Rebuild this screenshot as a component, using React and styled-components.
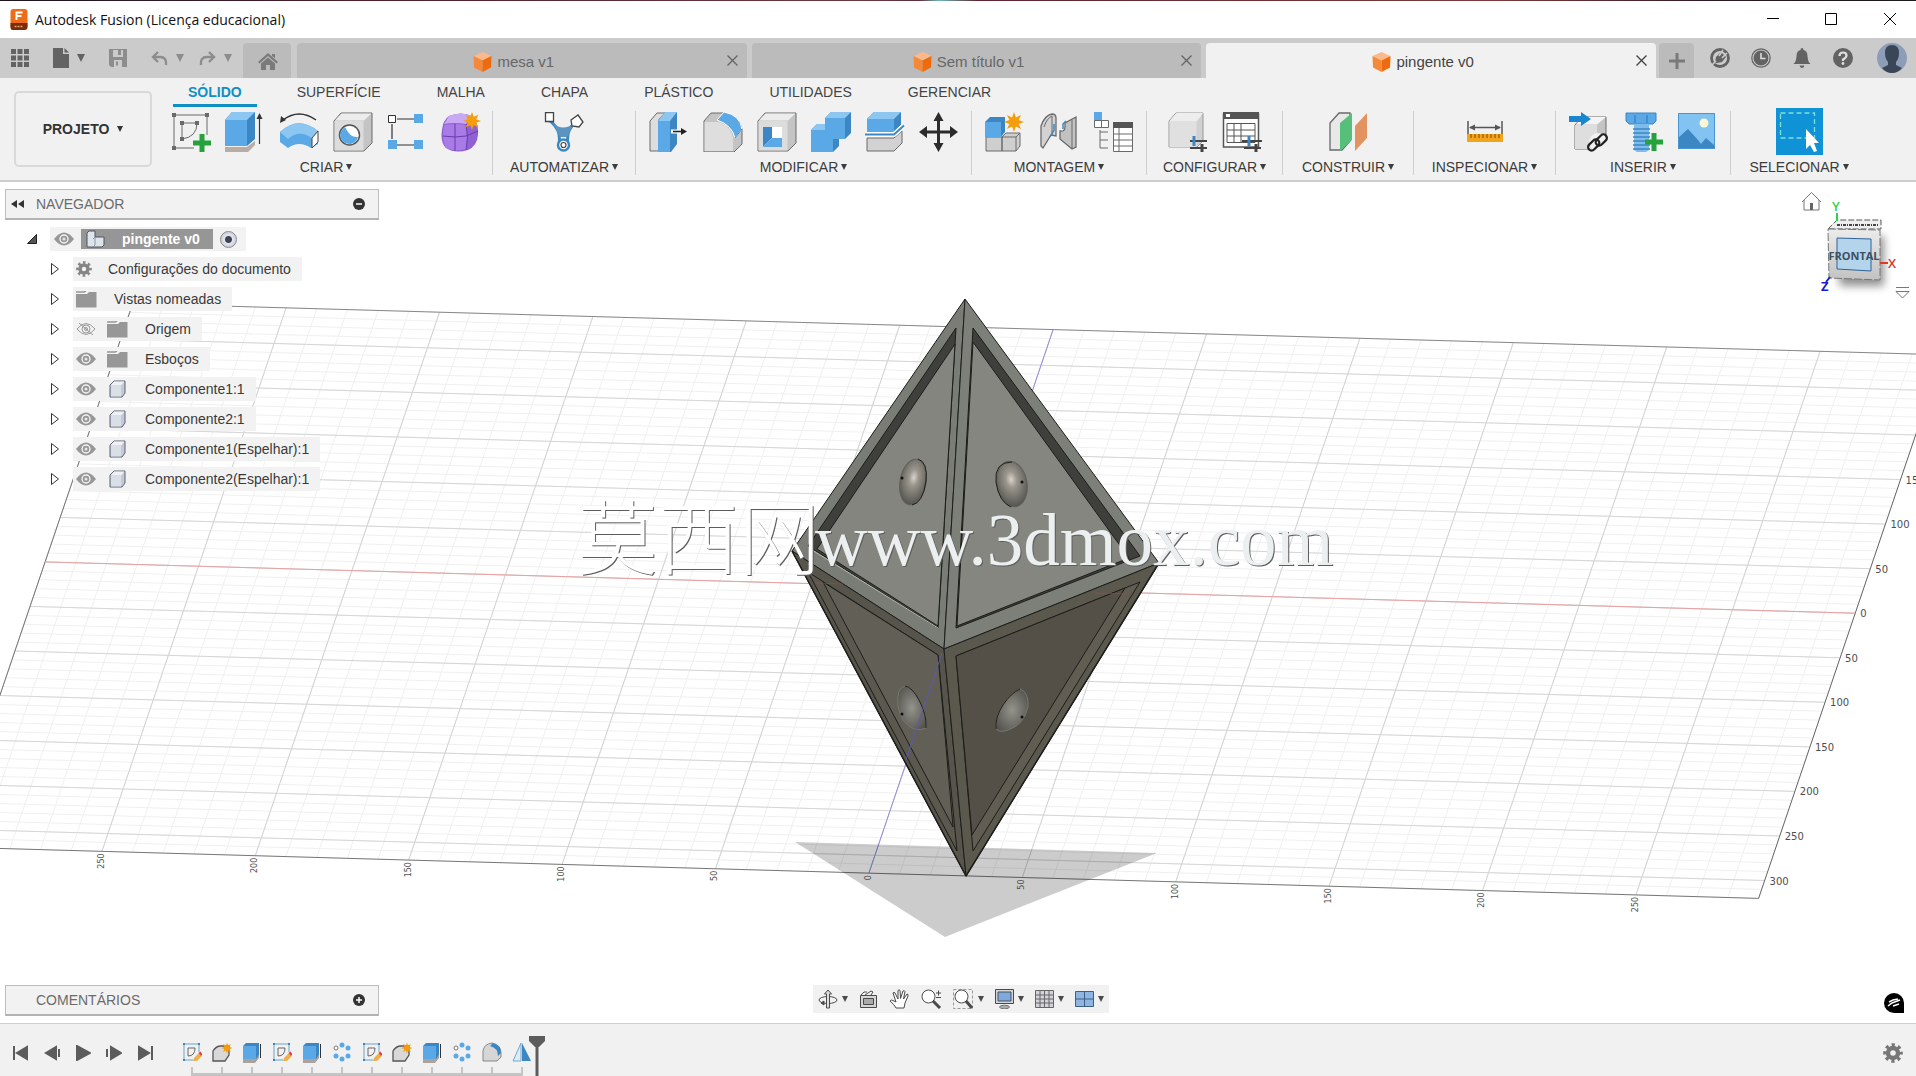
import React, { useState } from 'react'
import styled, { createGlobalStyle } from 'styled-components'


const GlobalStyle = createGlobalStyle`
  * {
    box-sizing: border-box;
  }

  body {
    margin: 0;
    background: #fff;
    color: #333;
    font-family: "Liberation Sans", Arial, sans-serif;
    font-size: 14px;
  }

  button {
    margin: 0;
    padding: 0;
    border: 0;
    background: none;
    color: inherit;
    font: inherit;
    cursor: pointer;
  }

  svg {
    display: block;
    flex: none;
  }

  ul, ol {
    margin: 0;
    padding: 0;
    list-style: none;
  }
`

const Page = styled.div`
  display: flex;
  flex-direction: column;
  min-height: 100vh;
  overflow: hidden;
`

/* ---------- title bar ---------- */

const TitleBar = styled.header`
  display: flex;
  align-items: center;
  height: 38px;
  padding: 0 18px 0 9px;
  gap: 6px;
  background:
    linear-gradient(90deg, #1b1420, #4a1f28 18%, #6b3a40 45%, #5b2f3a 48%, #6fb5bd 49%, #5b2530 51%, #7d3a3c 78%, #2a1820 90%, #1c1a1c) top / 100% 1px no-repeat,
    #fff;
`

const AppTitle = styled.h1`
  flex: 1;
  margin: 0;
  color: #111;
  font-family: "Open Sans", "Noto Sans", sans-serif;
  font-size: 14px;
  font-weight: 400;
`

const WindowButtons = styled.div`
  display: flex;
  gap: 42px;
`

/* ---------- document tabs ---------- */

const TabBar = styled.nav`
  display: flex;
  align-items: flex-end;
  height: 40px;
  background: #cbcbcb;
  color: #636363;
`

const QuickTools = styled.div`
  display: flex;
  align-items: center;
  align-self: stretch;
  gap: 24px;
  padding: 0 11px 0 10px;
`

const ToolPair = styled.div`
  display: flex;
  gap: 15px;
`

const QuickButton = styled.button`
  display: flex;
  align-items: center;
  gap: 8px;
  color: ${p => (p.$dim ? '#8d8d8d' : '#636363')};
`

const HomeTab = styled.button`
  display: flex;
  align-items: center;
  justify-content: center;
  width: 48px;
  height: 35px;
  padding-top: 2px;
  border-radius: 4px 4px 0 0;
  background: #bbb;
  color: #7a7a7a;
`

const DocTabs = styled.div`
  display: flex;
  flex: 1;
  gap: 5px;
  padding: 0 3px 0 6px;
`

const DocTab = styled.div`
  display: flex;
  flex: 1;
  align-items: center;
  height: 35px;
  padding-right: 9px;
  border-radius: 4px 4px 0 0;
  background: ${p => (p.$active ? '#f1f1f1' : '#bbb')};
  color: ${p => (p.$active ? '#444' : '#666')};
`

const DocName = styled.button`
  display: flex;
  flex: 1;
  align-items: center;
  justify-content: center;
  gap: 5px;
  padding: 2px 0 0 4px;
  font-size: 15px;
`

const AddTab = styled(HomeTab)`
  width: 35px;
  padding-top: 0;
`

const AccountTools = styled.div`
  display: flex;
  align-items: center;
  align-self: stretch;
  gap: 21px;
  padding: 0 9px 0 16px;

  button:last-child {
    margin-left: 3px;
  }
`

/* ---------- ribbon ---------- */

const Ribbon = styled.section`
  display: flex;
  height: 104px;
  border-bottom: 2px solid #cdcdcd;
  background: #f1f1f1;
`

const ProjectButton = styled.button`
  display: flex;
  align-items: center;
  justify-content: center;
  gap: 8px;
  width: 138px;
  height: 76px;
  margin: 13px 8px 0 14px;
  border: 2px solid #d9d9d9;
  border-radius: 5px;
  font-weight: bold;
`

const RibbonTabs = styled.div`
  display: flex;
  gap: 24px;
  height: 30px;
  padding-left: 13px;
`

const RibbonTab = styled.button`
  height: 29px;
  padding: 2px 15px 0;
  border-bottom: 3px solid ${p => (p.$active ? '#0f8fc4' : 'transparent')};
  color: ${p => (p.$active ? '#0f8fc4' : '#444')};
  font-weight: ${p => (p.$active ? 'bold' : 'normal')};

  & + & {
    padding: 2px 16px 0;
  }
`

const Groups = styled.div`
  display: flex;
`

const Group = styled.div`
  display: flex;
  flex-direction: column;
  align-items: center;
  width: ${p => p.$width}px;
`

const GroupIcons = styled.div`
  display: flex;
  align-items: center;
  gap: 14px;
  height: 47px;
`

const GroupLabel = styled.button`
  display: flex;
  align-items: center;
  gap: 3px;
  height: 24px;
  color: #3c3c3c;
`

const Divider = styled.div`
  width: 1px;
  height: 64px;
  margin-top: 3px;
  background: #cfcfcf;
`

const SelectTool = styled.button`
  display: flex;
  align-items: center;
  justify-content: center;
  width: 47px;
  height: 47px;
  background: #0f92d6;
`

/* ---------- viewport ---------- */

const Viewport = styled.main`
  position: relative;
  display: flex;
  flex: 1;
  background: #fff;
`

const Scene = styled.svg`
  position: absolute;
  inset: 0;
  width: 100%;
  height: 100%;
`

const Side = styled.aside`
  position: relative;
  display: flex;
  flex-direction: column;
  justify-content: space-between;
  width: 379px;
  padding: 7px 0 7px 5px;
`

const PanelBar = styled.div`
  display: flex;
  align-items: center;
  height: 31px;
  padding: 0 13px 0 5px;
  border: 1px solid #bdbdbd;
  border-bottom: 2px solid #b3b3b3;
  background: #f2f2f2;
  color: #6b6b6b;
`

const PanelTitle = styled.h2`
  flex: 1;
  margin: 0;
  padding-left: ${p => (p.$indent ? '25px' : '12px')};
  font-size: 14px;
  font-weight: 400;
`

const Tree = styled.ul`
  display: flex;
  flex-direction: column;
  gap: 6px;
  margin-top: 7px;
`

const TreeRow = styled.li`
  display: flex;
  align-items: center;
  height: 24px;
  gap: ${p => (p.$root ? '13px' : '14px')};
  padding-left: ${p => (p.$root ? '22px' : '46px')};
`

const TreeBox = styled.div`
  display: flex;
  align-items: center;
  height: 24px;
  gap: ${p => (p.$root ? '7px' : '11px')};
  padding: ${p => (p.$root ? '0 9px 0 4px' : '0 11px 0 3px')};
  background: #f2f2f2;
`

const TreeName = styled.button`
  padding-left: 5px;
  color: #3a3a3a;
`

const RootName = styled.button`
  display: flex;
  align-items: center;
  gap: 17px;
  width: 132px;
  height: 20px;
  padding-left: 5px;
  background: #969696;
  color: #fff;
  font-weight: bold;
`

const RootRadio = styled.input`
  appearance: none;
  width: 17px;
  height: 17px;
  margin: 0;
  border: 1px solid #8a8a8a;
  border-radius: 50%;
  background: radial-gradient(circle, #3d4354 0 3px, #e3e6ee 4px, #c9cdd8 8px);
`

const CubeWidget = styled.svg`
  position: absolute;
  top: 4px;
  right: 0;
`

const NavBar = styled.div`
  position: absolute;
  bottom: 10px;
  left: 50%;
  display: flex;
  align-items: center;
  gap: 11px;
  height: 28px;
  margin-left: 3px;
  padding: 0 5px;
  background: #f1f1f1;
  color: #4a4a4a;
  transform: translateX(-50%);
`

const NavButton = styled.button`
  display: flex;
  align-items: center;
  gap: 4px;
`

const ChatButton = styled.button`
  position: absolute;
  right: 12px;
  bottom: 10px;
`

/* ---------- timeline ---------- */

const Footer = styled.footer`
  display: flex;
  height: 53px;
  border-top: 1px solid #cfcfcf;
  background: #f1f1f1;
  color: #5c5c5c;
`

const Playback = styled.div`
  display: flex;
  align-items: center;
  gap: 15px;
  height: 58px;
  padding: 0 29px 0 13px;
`

const Track = styled.div`
  padding-top: 18px;
`

const Steps = styled.ol`
  display: flex;
  gap: 10px;
`

const Step = styled.li`
  display: flex;
  flex-direction: column;
  align-items: center;
  gap: 3px;
  width: 20px;

  &::after {
    content: "";
    width: 2px;
    height: 8px;
    background: #c4c4c4;
  }
`

const TrackLine = styled.div`
  height: 3px;
  margin: -2px 9px 0;
  background: #c4c4c4;
`

const Marker = styled.svg`
  margin: 12px 0 0 -3px;
`

const SettingsButton = styled.button`
  height: 58px;
  margin-left: auto;
  padding-right: 13px;
  color: #777;
`


/* ---------- small glyphs ---------- */

const Caret = ({ size = 6 }) => (
  <svg width={size} height={size} viewBox="0 0 6 6">
    <path d="M0 0h6L3 6z" fill="currentColor" />
  </svg>
)

const CloseX = ({ size = 11, width = 1.4 }) => (
  <svg width={size} height={size} viewBox="0 0 11 11">
    <path d="M.5.5l10 10M10.500.5l-10 10" stroke="currentColor" strokeWidth={width} />
  </svg>
)

const OrangeCube = () => (
  <svg width="19" height="20" viewBox="0 0 19 20">
    <path d="M9.500 0L18.500 4 9.500 8.500.5 4z" fill="#fbb98c" />
    <path d="M.5 4l9 4.500V20L1 15.500z" fill="#f4893a" />
    <path d="M18.500 4l-9 4.500V20l8.500-4.500z" fill="#ee6a0d" />
  </svg>
)

const Gear = ({ size = 18, color = '#777' }) => (
  <svg width={size} height={size} viewBox="0 0 20 20">
    <g fill="none" stroke={color}>
      <circle cx="10" cy="10" r="5" strokeWidth="4.400" />
      <circle cx="10" cy="10" r="8.200" strokeWidth="3.200" strokeDasharray="3.220 3.220" strokeDashoffset="1.610" />
    </g>
  </svg>
)

const Eye = ({ off }) => (
  <svg width="20" height="14" viewBox="0 0 20 14">
    {off ? (
      <g fill="none" stroke="#999" strokeWidth="1">
        <path d="M1 7q9-11 18 0-9 11-18 0z" />
        <circle cx="10" cy="7" r="4" />
        <circle cx="10" cy="7" r="1.500" />
        <path d="M3 1l14 12" />
      </g>
    ) : (
      <g>
        <path d="M0 7q10-13 20 0-10 13-20 0z" fill="#979797" />
        <circle cx="10" cy="7" r="4" fill="#979797" stroke="#f2f2f2" strokeWidth="1.400" />
        <circle cx="10" cy="7" r="1.500" fill="#e8e8e8" />
      </g>
    )}
  </svg>
)

const Folder = () => (
  <svg width="22" height="17" viewBox="0 0 22 17">
    <path d="M0 3h11l2-2h7.500v15.500H0z" fill="#979797" />
    <path d="M0 1h8l2-1" stroke="#979797" strokeWidth="1.500" fill="none" />
  </svg>
)

const Body = () => (
  <svg width="22" height="18" viewBox="0 0 22 18">
    <path d="M3 5l4-4h11v12l-3 4H3z" fill="#c3cad6" stroke="#5c6373" />
    <path d="M3.500 5.500L7 1.500h10.500L14 5.500z" fill="#eef1f6" />
    <path d="M4 6h10v10.500H4z" fill="#d9dee7" />
  </svg>
)

const Assembly = () => (
  <svg width="19" height="18" viewBox="0 0 19 18">
    <path d="M1 3l2-2h6v6h9v8l-2 2H1z" fill="#dfe3ea" stroke="#4e5566" />
    <path d="M9 7v8l-2 2M9 7L7 9" fill="none" stroke="#8f97a6" />
  </svg>
)

const Star = ({ x, y, r = 9 }) => {
  const pts = []
  for (let i = 0; i < 16; i++) {
    const a = (Math.PI * i) / 8
    const d = i % 2 ? r * 0.5 : r
    pts.push(`${x + d * Math.sin(a)},${y - d * Math.cos(a)}`)
  }
  return <polygon points={pts.join(' ')} fill="#f59d0a" />
}

const Plus = ({ x, y }) => (
  <path d={`M${x} ${y - 9}v18M${x - 9} ${y}h18`} stroke="#26a23c" strokeWidth="5" />
)


/* ---------- ribbon icons, all on a 40 unit grid ---------- */

const blue = '#5aa9e6'
const darkBlue = '#3c86c4'
const line = '#6a6a6a'

const ICONS = {
  sketch: (
    <>
      <path d="M3 3h33v20M3 3v33h20" fill="none" stroke={line} />
      <path d="M11 11h15q0 14-15 16z" fill="none" stroke={line} />
      <path d="M1 1h4v4H1zM34 1h4v4h-4zM1 34h4v4H1zM9 9h4v4H9zM24 9h4v4h-4zM9 25h4v4H9z" fill={line} />
      <Plus x={31} y={31} />
    </>
  ),
  extrude: (
    <>
      <path d="M0 35h22l8-6v4l-7 7H0z" fill="#b7aca6" />
      <path d="M0 8l7-8h23v27l-8 7H0z" fill={darkBlue} />
      <path d="M0 8h22v26H0z" fill={blue} />
      <path d="M0 8l7-8h23l-8 8z" fill="#8cc6f1" />
      <path d="M34.500 5v27" stroke="#333" strokeWidth="1.200" />
      <path d="M31.500 7l3-6 3 6z" fill="#333" />
    </>
  ),
  revolve: (
    <>
      <path d="M1 20q18-17 38-1v13l-7 4q-12-8-23 0L1 30z" fill={blue} />
      <path d="M1 20q18-17 38-1l-6 7q-13-9-24 1z" fill="#8cc6f1" />
      <path d="M33 26l6-7v11l-6 6z" fill="#fff" stroke="#444" />
      <path d="M4 8q16-12 33 0" fill="none" stroke="#333" strokeWidth="1.500" />
      <path d="M1 11l1-7 5 4z" fill="#333" />
    </>
  ),
  hole: (
    <>
      <path d="M1 9l7-8h31v30l-8 8H1z" fill="#c4c4c4" stroke={line} />
      <path d="M1.500 9h29v29.500h-29z" fill="#dcdcdc" />
      <path d="M2 8.500l6.500-7h30L31 8.500z" fill="#ececec" />
      <circle cx="16.500" cy="23" r="10" fill="#fff" stroke="#555" strokeWidth="1.500" />
      <path d="M12 15a9 9 0 1 0 13 10q-8 1-13-10z" fill={blue} />
    </>
  ),
  pattern: (
    <>
      <path d="M10 7h17M5 12v15M10 33h17" stroke="#333" strokeWidth="1.200" />
      <path d="M1.500 3.500h7v7h-7z" fill="#fff" stroke="#333" />
      <path d="M27 2h9v9h-9zM1 28h9v9H1zM27 28h9v9h-9z" fill={blue} />
    </>
  ),
  form: (
    <>
      <path d="M8 4Q20-1 31 4q7 8 6 19-1 11-10 15-13 4-22-2Q-1 30 1 18 2 8 8 4z" fill="#9061d2" />
      <path d="M8 4Q20-1 31 4l-6 8q-12-2-22 0z" fill="#c9a8f4" />
      <path d="M3 13q11-2 22 0 2 13 0 24-11 3-20-1-5-8-2-23z" fill="#a97be6" />
      <path d="M2 24q12 2 23 0l12-5M14 12v27M25 12q3 13 0 26" fill="none" stroke="#6a3ab0" />
      <Star x={31} y={9} />
    </>
  ),
  automate: (
    <>
      <path d="M5 8q8 6 10 14 1 6 0 12M34 8q-8 6-10 14-1 6 0 12" fill="none" stroke={darkBlue} strokeWidth="3" />
      <path d="M9 11q10 9 21 0l-7 14h-7z" fill="#5c93bf" />
      <circle cx="19.500" cy="33" r="5.500" fill="#fff" stroke={darkBlue} strokeWidth="2.500" />
      <circle cx="19.500" cy="33" r="2.500" fill="none" stroke="#444" strokeWidth="1.200" />
      <path d="M1.500.5h8v9h-8z" fill="#fff" stroke="#444" strokeWidth="1.300" />
      <path d="M34 3l5 7-4 5-7-1-1-6z" fill="#fff" stroke="#444" strokeWidth="1.300" />
    </>
  ),
  press: (
    <>
      <path d="M1 9l7-8h8v38H1z" fill="#ddd" stroke={line} />
      <path d="M9 8l7-8h12v32l-6 8H9z" fill={darkBlue} />
      <path d="M9 9h12v31H9z" fill={blue} />
      <path d="M9 9l7-9h12l-7 9z" fill="#8cc6f1" />
      <path d="M22 19.500h11" stroke="#fff" strokeWidth="4" />
      <path d="M24 19.500h9" stroke="#222" strokeWidth="1.600" />
      <path d="M32 16l6 3.500-6 3.500z" fill="#222" />
    </>
  ),
  fillet: (
    <>
      <path d="M1 9l7-8h14q15 3 17 16v15l-8 8H1z" fill="#c4c4c4" stroke={line} />
      <path d="M1.500 10H15q13 3 15 17v12H1.500z" fill="#dedede" />
      <path d="M14 8l7-8q16 3 18 17l-7 9q-3-13-18-18z" fill={blue} stroke="#fff" />
      <path d="M39 17l-7 9" stroke={darkBlue} />
    </>
  ),
  shell: (
    <>
      <path d="M1 9l7-8h31v30l-8 8H1z" fill="#c4c4c4" stroke={line} />
      <path d="M1.500 9h29v29.500h-29z" fill="#dcdcdc" />
      <path d="M2 8.500l6.500-7h30L31 8.500z" fill="#ececec" />
      <path d="M6 15h19v20H6z" fill="#fff" />
      <path d="M6 15h9v11l-9 9z" fill={darkBlue} />
      <path d="M6 35l9-9h10v9z" fill={blue} />
    </>
  ),
  combine: (
    <>
      <path d="M14 6l6-6h20v21l-6 6h-6v7l-6 6H0V18l6-6h8z" fill={darkBlue} />
      <path d="M14 6h20v21H22v13H0V18h14z" fill={blue} />
      <path d="M14 6l6-6h20l-6 6zM0 18l6-6h8v6z" fill="#8cc6f1" />
    </>
  ),
  split: (
    <>
      <path d="M2 7l7-7h27v13l-7 7H2z" fill={darkBlue} />
      <path d="M2 7h27v13H2z" fill={blue} />
      <path d="M2 7l7-7h27l-7 7z" fill="#8cc6f1" />
      <path d="M2 26h27l8-7v12l-8 8H2z" fill="#d2d2d2" stroke={line} />
      <path d="M0 22.500h29l10-9" fill="none" stroke="#fff" strokeWidth="5" />
      <path d="M0 22.500h29l10-9" fill="none" stroke={darkBlue} strokeWidth="2" />
    </>
  ),
  move: (
    <>
      <path d="M19.500 5v30M5 20h29" stroke="#2c2c2c" strokeWidth="3" />
      <path d="M19.500 0l5 9h-10zM19.500 40l5-9h-10zM0 20l8-6v12zM39 20l-8-6v12z" fill="#2c2c2c" />
    </>
  ),
  component: (
    <>
      <path d="M1 25h16v14H1zM17 25l4-4h14v13l-4 5H17z" fill="#cfcfcf" stroke={line} />
      <path d="M17 25h14v14M31 25l4-4" fill="none" stroke={line} />
      <path d="M0 10l5-5h15v15l-4 5H0z" fill={darkBlue} />
      <path d="M0 10h16v15H0z" fill={blue} />
      <Star x={29} y={10} r={10} />
    </>
  ),
  joint: (
    <>
      <path d="M2 14Q6 3 13 2q4 0 4 4v18l-5-1-8 13-2-2z" fill="#d2d2d2" stroke={line} strokeWidth="1.300" />
      <path d="M5 15Q8 6 13 4v19" fill="none" stroke={line} />
      <path d="M37 5v30l-4 2-12-10v-8q5 1 5-4v-4z" fill="#c2c2c2" stroke={line} strokeWidth="1.300" />
      <path d="M33 8v28" stroke={line} />
      <path d="M11 25l4-7v-6M27 9l-3 3v5" fill="none" stroke={darkBlue} strokeWidth="1.500" />
    </>
  ),
  structure: (
    <>
      <path d="M1 0h8v9H1z" fill={blue} />
      <path d="M1.500 8.500h7v7h-7zM8.500 8.500h7v7h-7z" fill="#fff" stroke={line} />
      <path d="M7 18v18M7 20h8M7 28h8M7 36h8" fill="none" stroke={line} />
      <path d="M20.500 12h19v27.500h-19z" fill="#fff" stroke={line} />
      <path d="M20 10h20v6H20z" fill="#555" />
      <path d="M20 22h20M20 28h20M20 34h20M26 16v24" stroke={line} />
    </>
  ),
  configure: (
    <>
      <path d="M1 9l7-8h27v28l-6 6H1z" fill="#d0d0d0" stroke="#999" />
      <path d="M1.500 9h27v26h-27z" fill="#e0e0e0" />
      <path d="M1.500 9l7-8h26.500l-6 8z" fill="#ededed" />
      <path d="M22 29h17M22 36h17" stroke="#444" strokeWidth="2" />
      <path d="M26 24v10" stroke={darkBlue} strokeWidth="3" />
      <path d="M34 32v8" stroke="#444" strokeWidth="3" />
    </>
  ),
  table: (
    <>
      <path d="M1.500 2h35v33h-35z" fill="#fff" stroke="#555" strokeWidth="1.500" />
      <path d="M1 0h36v7H1z" fill="#555" />
      <path d="M4 2h4v3H4z" fill="#fff" />
      <path d="M5 11.500h28v19H5zM5 18h28M5 24h28M12 12v19M19 12v19" fill="none" stroke="#555" />
      <path d="M20 29h20M22 36h17" stroke="#444" strokeWidth="2" />
      <path d="M27 24v10" stroke={darkBlue} strokeWidth="3" />
      <path d="M34 32v8" stroke="#444" strokeWidth="3" />
    </>
  ),
  plane: (
    <>
      <path d="M2 11l9-10h11v28l-8 9H2z" fill="#e8e8e8" stroke={line} strokeWidth="1.300" />
      <path d="M12 11L24 1v27L12 39z" fill="#56bf7a" />
      <path d="M27 14L39 1v25L27 39z" fill="#e2935f" />
    </>
  ),
  measure: (
    <>
      <path d="M3 9v13M37 9v13M5 15.500h30" stroke="#555" strokeWidth="1.500" />
      <path d="M4 15.500l6-3v6zM36 15.500l-6-3v6z" fill="#555" />
      <path d="M2 22h36v8H2z" fill="#f2a51c" />
      <path d="M6 22v4M10 22v4M14 22v4M18 22v4M22 22v4M26 22v4M30 22v4M34 22v4" stroke="#7a4a00" />
    </>
  ),
  link: (
    <>
      <path d="M6 13l7-8h24v22l-9 10H6z" fill="#c4c4c4" stroke={line} />
      <path d="M6 13h22v24H6z" fill="#dedede" />
      <path d="M7 12.500L13 5h24l-9 7.500z" fill="#f4f4f4" />
      <path d="M0 4h12V0l10 7-10 7v-4H0z" fill="#1a86d0" />
      <circle cx="29" cy="30" r="9" fill="#f1f1f1" />
      <g fill="none" stroke="#222" strokeWidth="2.200">
        <rect x="18" y="30" width="13" height="7" rx="3.500" transform="rotate(-45 24 33)" />
        <rect x="26" y="24" width="13" height="7" rx="3.500" transform="rotate(-45 33 28)" />
      </g>
    </>
  ),
  bolt: (
    <>
      <path d="M3 1h30v8l-3 3H6L3 9z" fill={blue} stroke={darkBlue} />
      <path d="M11 12h15v26l-3 2h-9l-3-2z" fill="#7fbcec" />
      <path d="M10 17h17M10 21h17M10 25h17M10 29h17M10 33h17M10 37h17M12 3v8M24 3v8" stroke={darkBlue} strokeWidth="1.500" />
      <Plus x={31} y={30} />
    </>
  ),
  picture: (
    <>
      <path d="M1 1h37v36H1z" fill="#83c3f2" />
      <path d="M1 26l10-9 10 11 3 4 5-6 9 8v3H1z" fill={darkBlue} />
      <circle cx="27" cy="11" r="4.500" fill="#fdf8d4" />
      <path d="M1.500 1.500h36v35h-36z" fill="none" stroke="#4a95cf" />
    </>
  ),
}

const Icon = ({ name }) => (
  <svg width="40" height="40" viewBox="0 0 40 40">{ICONS[name]}</svg>
)

const GROUPS = [
  { label: 'CRIAR', width: 332, icons: ['sketch', 'extrude', 'revolve', 'hole', 'pattern', 'form'] },
  { label: 'AUTOMATIZAR', width: 142, icons: ['automate'] },
  { label: 'MODIFICAR', width: 335, icons: ['press', 'fillet', 'shell', 'combine', 'split', 'move'] },
  { label: 'MONTAGEM', width: 174, icons: ['component', 'joint', 'structure'] },
  { label: 'CONFIGURAR', width: 135, icons: ['configure', 'table'] },
  { label: 'CONSTRUIR', width: 130, icons: ['plane'] },
  { label: 'INSPECIONAR', width: 141, icons: ['measure'] },
  { label: 'INSERIR', width: 174, icons: ['link', 'bolt', 'picture'] },
]

const RIBBON_TABS = ['SÓLIDO', 'SUPERFÍCIE', 'MALHA', 'CHAPA', 'PLÁSTICO', 'UTILIDADES', 'GERENCIAR']

const DOCS = ['mesa v1', 'Sem título v1', 'pingente v0']


/* ---------- timeline icons, 20 unit grid ---------- */

const STEP_ICONS = {
  sketch: (
    <>
      <path d="M2 2h15v8M2 2v16h9" fill="none" stroke="#6ba5c9" />
      <path d="M6 6h7q0 8-7 8z" fill="none" stroke="#666" />
      <path d="M1 1h2v2H1zM16 1h2v2h-2zM1 17h2v2H1z" fill="#3d87b5" />
      <path d="M11 19l1-3 5-5 3 3-5 5z" fill="#eeb04c" />
      <path d="M16.500 11l2-1.500 2 2.500-1.500 2z" fill="#dd4343" />
    </>
  ),
  component: (
    <>
      <path d="M1 9q3-5 8-5h8v9l-4 6H1z" fill="#d8d8d8" stroke="#555" strokeWidth="1.300" />
      <Star x={15} y={6} r={5.500} />
    </>
  ),
  extrude: (
    <>
      <path d="M1 16h13l3-3v3l-4 5H1z" fill="#aaa29c" />
      <path d="M1 4l3-3h13v12l-3 4H1z" fill={darkBlue} />
      <path d="M1 4h13v13H1z" fill={blue} />
      <path d="M18.500 2v14" stroke="#333" />
    </>
  ),
  circular: (
    <>
      {[[10, 3], [16, 6], [16, 14], [10, 17], [4, 14]].map(([x, y]) => (
        <circle key={x + '-' + y} cx={x} cy={y} r="2.500" fill={blue} />
      ))}
      <circle cx="4" cy="6" r="2" fill="#fff" stroke="#777" />
    </>
  ),
  fillet: (
    <>
      <path d="M1 19V9Q2 2 10 1q9 2 9 10v4l-4 4z" fill="#d6d6d6" stroke="#888" />
      <path d="M8 4l3-3q8 2 8 10l-3 3Q16 6 8 4z" fill={darkBlue} />
    </>
  ),
  mirror: (
    <>
      <path d="M9 1v18H1z" fill="#dcebf5" stroke="#77a9cc" />
      <path d="M10 1v18h9z" fill={darkBlue} />
    </>
  ),
}

const STEPS = [
  'sketch', 'component', 'extrude', 'sketch', 'extrude', 'circular',
  'sketch', 'component', 'extrude', 'circular', 'fillet', 'mirror',
]

const PLAYBACK = [
  ['Início', 'M1 1v14M14 2v12L4 8z'],
  ['Voltar', 'M12 2v12L2 8zM15 4v8'],
  ['Reproduzir', 'M2 1v14l13-7z'],
  ['Avançar', 'M5 2v12l10-6zM1 4v8'],
  ['Fim', 'M2 2v12l10-6zM15 1v14'],
]

const TREE = [
  { name: 'Configurações do documento', icon: 'gear' },
  { name: 'Vistas nomeadas', icon: 'folder' },
  { name: 'Origem', icon: 'folder', eye: 'off' },
  { name: 'Esboços', icon: 'folder', eye: 'on' },
  { name: 'Componente1:1', icon: 'body', eye: 'on' },
  { name: 'Componente2:1', icon: 'body', eye: 'on' },
  { name: 'Componente1(Espelhar):1', icon: 'body', eye: 'on' },
  { name: 'Componente2(Espelhar):1', icon: 'body', eye: 'on' },
]


/* ---------- scene ---------- */

// ground plane: u runs along the red axis, v along the blue one
const ground = (u, v) => [965.5 + u * 3.068 - v * 0.302, 588 + u * 0.087 + v * 0.891]
const segment = (a, b) => `M${a[0].toFixed(1)} ${a[1].toFixed(1)}L${b[0].toFixed(1)} ${b[1].toFixed(1)}`

const U = [-300, 290]
const V = [-290, 320]

const steps = ([from, to], size) => {
  const out = []
  for (let i = Math.ceil(from / size) * size; i <= to; i += size) out.push(i)
  return out
}

const alongV = size => steps(U, size).map(u => segment(ground(u, V[0]), ground(u, V[1]))).join('')
const alongU = size => steps(V, size).map(v => segment(ground(U[0], v), ground(U[1], v))).join('')

function Grid() {
  return (
    <g fill="none">
      <path d={alongV(10)} stroke="#f0f0f0" />
      <path d={alongU(10)} stroke="#f0f0f0" />
      <path d={alongV(50)} stroke="#d2d2d2" />
      <path d={alongU(50)} stroke="#d6d6d6" />
      <path d={segment(ground(U[0], V[0]), ground(U[1], V[0]))} stroke="#888" />
      <path d={segment(ground(U[0], V[1]), ground(U[1], V[1]))} stroke="#777" />
      <path d={segment(ground(U[0], V[0]), ground(U[0], V[1]))} stroke="#777" />
      <path d={segment(ground(U[1], V[0]), ground(U[1], V[1]))} stroke="#666" />
      <path d={segment(ground(U[0], 0), ground(U[1], 0))} stroke="#eba0a0" />
      <path d={segment(ground(0, V[0]), ground(0, V[1]))} stroke="#8f8fe0" />
    </g>
  )
}

function GridLabels() {
  return (
    <g fill="#4d4d4d" fontFamily="DejaVu Sans, sans-serif">
      {steps([-150, 300], 50).map(v => {
        const [x, y] = ground(U[1], v)
        return <text key={'v' + v} x={x + 5} y={y + 4} fontSize="10">{Math.abs(v)}</text>
      })}
      {steps([-250, 250], 50).map(u => {
        const [x, y] = ground(u, V[1])
        return (
          <text key={'u' + u} fontSize="8" textAnchor="end" transform={`translate(${x + 2} ${y + 2}) rotate(-90)`}>
            {Math.abs(u)}
          </text>
        )
      })}
    </g>
  )
}

function Pendant() {
  return (
    <g stroke="#1d1d1a" strokeLinejoin="round">
      {/* upper left face */}
      <path d="M965 299L792 551 944 649z" fill="#7a7c76" />
      <path d="M956 328L808 546 938 628z" fill="#3f403b" />
      <path d="M955 344L817 549 938 626z" fill="#83857e" />
      <path d="M812 550L938 628" stroke="#b5b7b0" fill="none" />
      {/* upper right face */}
      <path d="M965 299L944 649 1159 563z" fill="#7d7f79" />
      <path d="M973 328L1140 556 956 628z" fill="#3f403b" />
      <path d="M973 342L1129 558 957 626z" fill="#84867f" />
      {/* lower left face */}
      <path d="M792 551L944 649 966 876z" fill="#56544b" />
      <path d="M808 572L938 655 957 851z" fill="#5b594f" />
      <path d="M823 582L938 655 953 827z" fill="#626056" />
      {/* lower right face */}
      <path d="M944 649L1159 563 966 876z" fill="#5b584e" />
      <path d="M956 656L1140 582 973 851z" fill="#615d53" />
      <path d="M956 656L1125 588 972 835z" fill="#545047" />
      <path d="M792 551L966 876 1159 563" fill="none" strokeWidth="1.500" />
      {/* studs */}
      <g strokeWidth="1">
        <ellipse cx="913" cy="482" rx="13" ry="23" transform="rotate(10 913 482)" fill="url(#stud)" stroke="#60605a" />
        <path d="M918 459q10 3 8 22-3 22-14 24" fill="none" />
        <ellipse cx="1012" cy="484" rx="15" ry="23" transform="rotate(-10 1012 484)" fill="url(#stud)" stroke="#60605a" />
        <path d="M1012 462q-18 0-16 20 3 20 15 25" fill="none" />
        <path d="M905 686Q896 688 898 706q3 18 16 23 7 2 12-1 1-13-7-28-8-13-14-14z" fill="url(#studDark)" stroke="#77766f" />
        <path d="M905 686q7 1 14 14 8 15 7 28" fill="none" />
        <path d="M1020 689q9 3 8 18-4 18-20 23-8 3-12-1-1-12 7-24t17-16z" fill="url(#studDark)" stroke="#77766f" />
        <path d="M1020 689q-9 4-17 16t-7 24" fill="none" />
      </g>
      <g fill="#111" stroke="none">
        <circle cx="902" cy="478" r="1.500" />
        <circle cx="1022" cy="482" r="1.500" />
        <circle cx="902" cy="714" r="1.500" />
        <circle cx="1022" cy="717" r="1.500" />
      </g>
      <path d="M942 653L906 760" stroke="#5a58b8" />
      <path d="M815 583l28 1M1095 593l32 1" stroke="#b04a4a" opacity=".5" />
    </g>
  )
}

function Watermark() {
  return (
    <g fill="#eceff0" style={{ filter: 'drop-shadow(1px 1px 0 #5c5c5c)' }}>
      <text x="577" y="568" fontFamily="Noto Sans CJK SC, sans-serif" fontWeight="300" fontSize="81" fill="#fff">莫西网</text>
      <text x="815" y="565" fontFamily="Liberation Serif, serif" fontSize="73">www.3dmox.com</text>
    </g>
  )
}

function ModelScene() {
  return (
    <Scene viewBox="0 182 1916 841" preserveAspectRatio="xMidYMid slice">
      <defs>
        <radialGradient id="stud" cx=".5" cy=".4" r=".6">
          <stop offset="0" stopColor="#d9d3cb" />
          <stop offset=".3" stopColor="#9b968d" />
          <stop offset="1" stopColor="#54544f" />
        </radialGradient>
        <radialGradient id="studDark" cx=".5" cy=".5" r=".6">
          <stop offset="0" stopColor="#94938c" />
          <stop offset="1" stopColor="#54534d" />
        </radialGradient>
      </defs>
      <Grid />
      <path d="M795 842L1157 853 945 937z" fill="#000" opacity=".2" />
      <GridLabels />
      <Pendant />
      <Watermark />
    </Scene>
  )
}

function ViewCube() {
  return (
    <CubeWidget width="120" height="120" viewBox="1796 186 120 120">
      <defs>
        <linearGradient id="cubeFace" x1="0" y1="0" x2="0" y2="1">
          <stop offset="0" stopColor="#ececec" />
          <stop offset="1" stopColor="#c2c2c2" />
        </linearGradient>
        <filter id="cubeShadow" x="-30%" y="-30%" width="160%" height="160%">
          <feGaussianBlur stdDeviation="4" />
        </filter>
      </defs>
      <path d="M1834 236h50v50h-44z" fill="#777" opacity=".8" filter="url(#cubeShadow)" />
      <path d="M1802 202l9.500-9.500 9.500 9.500M1804 200v10h15v-10" fill="none" stroke="#777" />
      <path d="M1810 203h3v7h-3z" fill="#666" />
      <path d="M1828 229l9-9h44v9z" fill="#eee" stroke="#555" strokeDasharray="6 2" />
      <path d="M1837 225h41" stroke="#444" strokeWidth="2" strokeDasharray="3 1 1 1" />
      <path d="M1828 229l52 1v50l-51-2z" fill="url(#cubeFace)" stroke="#777" strokeDasharray="8 2" />
      <path d="M1837 238l34 1v32l-34-2z" fill="#b4d4ec" stroke="#2d6496" />
      <path d="M1837 213v8" stroke="#2fd04c" strokeWidth="2" />
      <path d="M1880 263h8" stroke="#e0372c" strokeWidth="2" />
      <path d="M1830 277l-4 5" stroke="#1c1cc8" strokeWidth="2" />
      <g fontFamily="Open Sans, Noto Sans, sans-serif" fontWeight="600" fontSize="13">
        <text x="1854" y="260" textAnchor="middle" fontWeight="700" fontSize="11" fill="#3e4f5e">FRONTAL</text>
        <text x="1832" y="211" fill="#2fd04c">Y</text>
        <text x="1888" y="268" fill="#d8342c">X</text>
        <text x="1821" y="291" fontWeight="700" fill="#1c1cc8">Z</text>
      </g>
      <path d="M1896 287.500h13M1896 291.500h13l-6.500 6.500z" fill="none" stroke="#777" />
    </CubeWidget>
  )
}


/* ---------- sections ---------- */

function WindowTitle() {
  return (
    <TitleBar>
      <svg width="20" height="21" viewBox="0 0 19 21">
        <rect x="1" y="0" width="17" height="20" rx="3" fill="#ee6c17" />
        <path d="M1 14h17v4q0 3-3 3H3q-2 0-2-3z" fill="#7a2c05" />
        <path d="M7 11V3.500h6M7 7h5" fill="none" stroke="#fff" strokeWidth="2" />
        <path d="M5 17.500h8" stroke="#e9a07a" strokeWidth="1.500" strokeDasharray="2 1" />
      </svg>
      <AppTitle>Autodesk Fusion (Licença educacional)</AppTitle>
      <WindowButtons>
        <button aria-label="Minimizar">
          <svg width="16" height="14" viewBox="0 0 16 14"><path d="M1 6.500h12" stroke="#000" /></svg>
        </button>
        <button aria-label="Maximizar">
          <svg width="16" height="14" viewBox="0 0 16 14"><path d="M1.500 1.500h11v11h-11z" fill="none" stroke="#000" /></svg>
        </button>
        <button aria-label="Fechar">
          <svg width="16" height="14" viewBox="0 0 16 14"><path d="M2 1l12 12M14 1L2 13" stroke="#000" /></svg>
        </button>
      </WindowButtons>
    </TitleBar>
  )
}

function DocumentBar() {
  return (
    <TabBar>
      <QuickTools>
        <QuickButton aria-label="Painel de dados">
          <svg width="19" height="18" viewBox="0 0 19 18">
            <path d="M1 0h5v5H1zM7.500 0h5v5h-5zM14 0h5v5h-5zM1 6.500h5v5H1zM7.500 6.500h5v5h-5zM14 6.500h5v5h-5zM1 13h5v5H1zM7.500 13h5v5h-5zM14 13h5v5h-5z" fill="currentColor" />
          </svg>
        </QuickButton>
        <QuickButton aria-label="Arquivo">
          <svg width="16" height="20" viewBox="0 0 16 20"><path d="M0 0h10v6h6v14H0zM11.500 0L16 4.500h-4.500z" fill="currentColor" /></svg>
          <Caret size={8} />
        </QuickButton>
        <QuickButton $dim aria-label="Salvar">
          <svg width="18" height="18" viewBox="0 0 18 18">
            <path d="M0 0h18v18H2l-2-2z" fill="currentColor" />
            <path d="M4 1h10v7H4zM5 11h8v7H5z" fill="#cbcbcb" />
            <path d="M9 1h3v5H9zM7 12.500h2v4H7z" fill="currentColor" />
          </svg>
        </QuickButton>
        <ToolPair>
          <QuickButton $dim aria-label="Desfazer">
            <svg width="17" height="15" viewBox="0 0 17 15"><path d="M7 1L2 6l5 5M2 6h7q7 0 6 8" fill="none" stroke="currentColor" strokeWidth="2.400" /></svg>
            <Caret size={8} />
          </QuickButton>
          <QuickButton $dim aria-label="Refazer">
            <svg width="17" height="15" viewBox="0 0 17 15"><path d="M10 1l5 5-5 5M15 6H8q-7 0-6 8" fill="none" stroke="currentColor" strokeWidth="2.400" /></svg>
            <Caret size={8} />
          </QuickButton>
        </ToolPair>
      </QuickTools>
      <HomeTab aria-label="Início">
        <svg width="22" height="17" viewBox="-2 0 22 17">
          <path d="M10 0l10 9-1.500 1.500L10 3 1.500 10.500 0 9zM14 1h3v4l-3-2z" fill="currentColor" />
          <path d="M3 10.500L10 4.500l7 6V17h-5v-5H8v5H3z" fill="currentColor" />
        </svg>
      </HomeTab>
      <DocTabs>
        {DOCS.map((name, i) => (
          <DocTab key={name} $active={i === 2}>
            <DocName><OrangeCube />{name}</DocName>
            <button aria-label={'Fechar ' + name}><CloseX /></button>
          </DocTab>
        ))}
      </DocTabs>
      <AddTab aria-label="Novo projeto">
        <svg width="16" height="16" viewBox="0 0 16 16"><path d="M8 0v16M0 8h16" stroke="currentColor" strokeWidth="3" /></svg>
      </AddTab>
      <AccountTools>
        <button aria-label="Extensões">
          <svg width="20" height="20" viewBox="0 0 20 20">
            <circle cx="10" cy="10" r="8.500" fill="none" stroke="currentColor" strokeWidth="2.800" />
            <path d="M5 15l1-6 5-5 5 5-4 5-5 1z" fill="currentColor" />
            <path d="M9 8l4-6M12 10l5-5M1 18l5-5" stroke="#cbcbcb" strokeWidth="1.600" />
          </svg>
        </button>
        <button aria-label="Status do trabalho">
          <svg width="20" height="20" viewBox="0 0 20 20">
            <circle cx="10" cy="10" r="9.200" fill="none" stroke="currentColor" strokeWidth="1.200" />
            <circle cx="10" cy="10" r="7.500" fill="currentColor" />
            <path d="M10 5v5.500h4.500" fill="none" stroke="#ddd" strokeWidth="1.600" />
          </svg>
        </button>
        <button aria-label="Notificações">
          <svg width="20" height="20" viewBox="0 0 20 20">
            <path d="M10 0q1.500 0 1.500 2 4 1 4 6 0 5 3 8H1.500q3-3 3-8 0-5 4-6 0-2 1.500-2zM7.500 17.500h5q-1 2.500-2.500 2.500t-2.500-2.500z" fill="currentColor" />
          </svg>
        </button>
        <button aria-label="Ajuda">
          <svg width="20" height="20" viewBox="0 0 20 20">
            <circle cx="10" cy="10" r="10" fill="currentColor" />
            <path d="M6.500 8q0-3.500 3.500-3.500t3.500 3q0 2-3.500 4v1.500" fill="none" stroke="#e0e0e0" strokeWidth="2.200" />
            <circle cx="10" cy="15.500" r="1.400" fill="#e0e0e0" />
          </svg>
        </button>
        <button aria-label="Conta">
          <svg width="30" height="30" viewBox="0 0 30 30">
            <circle cx="15" cy="15" r="15" fill="#8d9db8" />
            <path d="M15 2q7 0 7 8 0 6-3 9v3l6 3q-4 5-10 5T5 25l6-3v-3q-3-3-3-9 0-8 7-8z" fill="#3a4658" />
          </svg>
        </button>
      </AccountTools>
    </TabBar>
  )
}

function RibbonBar() {
  const [tab, setTab] = useState('SÓLIDO')

  return (
    <Ribbon>
      <ProjectButton>PROJETO <Caret /></ProjectButton>
      <div>
        <RibbonTabs>
          {RIBBON_TABS.map(name => (
            <RibbonTab key={name} $active={name === tab} onClick={() => setTab(name)}>{name}</RibbonTab>
          ))}
        </RibbonTabs>
        <Groups>
          {GROUPS.map(g => (
            <React.Fragment key={g.label}>
              <Group $width={g.width}>
                <GroupIcons>
                  {g.icons.map(name => (
                    <button key={name} aria-label={name}><Icon name={name} /></button>
                  ))}
                </GroupIcons>
                <GroupLabel>{g.label} <Caret /></GroupLabel>
              </Group>
              <Divider />
            </React.Fragment>
          ))}
          <Group $width={136}>
            <GroupIcons>
              <SelectTool aria-label="Selecionar">
                <svg width="41" height="41" viewBox="0 0 41 41">
                  <path d="M1.500 2h34v25h-34z" fill="none" stroke="#7fe0d8" strokeWidth="1.300" strokeDasharray="5 3" />
                  <path d="M27 18v20l4-4 4 7 3-1-3-8h5z" fill="#fff" />
                </svg>
              </SelectTool>
            </GroupIcons>
            <GroupLabel>SELECIONAR <Caret /></GroupLabel>
          </Group>
        </Groups>
      </div>
    </Ribbon>
  )
}

function Browser() {
  return (
    <div>
      <PanelBar>
        <button aria-label="Recolher">
          <svg width="13" height="8" viewBox="0 0 13 8"><path d="M6 0v8L0 4zM13 0v8L7 4z" fill="#333" /></svg>
        </button>
        <PanelTitle>NAVEGADOR</PanelTitle>
        <button aria-label="Minimizar navegador">
          <svg width="12" height="12" viewBox="0 0 12 12">
            <circle cx="6" cy="6" r="6" fill="#333" /><path d="M3 6h6" stroke="#fff" strokeWidth="1.500" />
          </svg>
        </button>
      </PanelBar>
      <Tree>
        <TreeRow $root>
          <svg width="10" height="10" viewBox="0 0 10 10"><path d="M9.500.5v9H.5z" fill="#555" stroke="#222" /></svg>
          <TreeBox $root>
            <Eye />
            <RootName><Assembly />pingente v0</RootName>
            <RootRadio type="radio" name="active" aria-label="Ativar pingente v0" defaultChecked />
          </TreeBox>
        </TreeRow>
        {TREE.map(item => (
          <TreeRow key={item.name}>
            <svg width="8" height="12" viewBox="0 0 8 12"><path d="M.5.5v11l7-5.500z" fill="#fff" stroke="#333" /></svg>
            <TreeBox>
              {item.eye && <Eye off={item.eye === 'off'} />}
              {item.icon === 'gear' && <Gear size={16} color="#858585" />}
              {item.icon === 'folder' && <Folder />}
              {item.icon === 'body' && <Body />}
              <TreeName>{item.name}</TreeName>
            </TreeBox>
          </TreeRow>
        ))}
      </Tree>
    </div>
  )
}

function NavTools() {
  return (
    <NavBar>
      <NavButton aria-label="Órbita">
        <svg width="20" height="20" viewBox="0 0 20 20" fill="none" stroke="currentColor">
          <ellipse cx="10" cy="11" rx="9" ry="3.500" />
          <path d="M8.500 19V5H6.500L10 1l3.500 4h-2v14z" fill="#ddd" />
          <path d="M3 14l3-2v4z" fill="currentColor" />
        </svg>
        <Caret />
      </NavButton>
      <NavButton aria-label="Olhar para">
        <svg width="19" height="18" viewBox="0 0 19 18" fill="none" stroke="currentColor">
          <path d="M1.500 5.500h16v12h-16z" fill="#d6d6d6" />
          <path d="M4.500 8.500h10v6h-10z" fill="#aaa" />
          <path d="M2 5l3-3h3M6 5l6-4 2 1-2 3" />
        </svg>
      </NavButton>
      <NavButton aria-label="Pan">
        <svg width="21" height="20" viewBox="0 0 21 20">
          <path d="M7 19q-2-4-6-7 1-2 4 0l2 1L4 4q1-1.500 2 0l3 6V1.500q1-1.500 2 0l.5 8L14 2q1.500-1 2 .5L14.500 10l3.500-5q1.500 0 1 2l-3 7-1 5z" fill="#fff" stroke="currentColor" />
        </svg>
      </NavButton>
      <NavButton aria-label="Zoom">
        <svg width="21" height="20" viewBox="0 0 21 20" fill="none" stroke="currentColor">
          <circle cx="7.500" cy="7.500" r="6.500" fill="#fff" />
          <path d="M12 12l7 7" strokeWidth="3" />
          <path d="M15 4h5M17.500 1.500v5M15 8.500h5" />
        </svg>
      </NavButton>
      <NavButton aria-label="Janela de zoom">
        <svg width="21" height="20" viewBox="0 0 21 20" fill="none" stroke="currentColor">
          <path d="M.5.5h19v19H.5z" stroke="#999" strokeDasharray="3 2" />
          <circle cx="8.500" cy="7.500" r="6.500" fill="#fff" />
          <path d="M13 12l6 7" strokeWidth="3" />
        </svg>
        <Caret />
      </NavButton>
      <NavButton aria-label="Exibição">
        <svg width="19" height="20" viewBox="0 0 19 20">
          <path d="M.5.5h18v14H.5z" fill="#d5d5d5" stroke="currentColor" />
          <path d="M3 3h13v9H3z" fill="#7fa8dc" stroke="#456" />
          <ellipse cx="9.500" cy="18" rx="5" ry="1.800" fill="#aaa" stroke="#777" />
        </svg>
        <Caret />
      </NavButton>
      <NavButton aria-label="Grade">
        <svg width="19" height="18" viewBox="0 0 19 18">
          <path d="M.5.5h18v17H.5z" fill="#d3d3da" />
          <path d="M.5.5h18v17H.5zM5 0v18M9.500 0v18M14 0v18M0 5h19M0 9h19M0 13h19" fill="none" stroke="#666" />
        </svg>
        <Caret />
      </NavButton>
      <NavButton aria-label="Viewports">
        <svg width="19" height="16" viewBox="0 0 19 16">
          <path d="M.5.5h18v15H.5z" fill="#8fb6e2" />
          <path d="M.5.5h18v15H.5zM9.500 0v16M0 8h19" fill="none" stroke="#3f5f85" />
        </svg>
        <Caret />
      </NavButton>
    </NavBar>
  )
}

function Timeline() {
  return (
    <Footer>
      <Playback>
        {PLAYBACK.map(([label, d]) => (
          <button key={label} aria-label={label}>
            <svg width="16" height="16" viewBox="0 0 16 16">
              <path d={d} fill="currentColor" stroke="currentColor" strokeWidth="2" />
            </svg>
          </button>
        ))}
      </Playback>
      <Track>
        <Steps>
          {STEPS.map((name, i) => (
            <Step key={i}>
              <button aria-label={name + ' ' + (i + 1)}>
                <svg width="20" height="22" viewBox="0 0 20 22">{STEP_ICONS[name]}</svg>
              </button>
            </Step>
          ))}
        </Steps>
        <TrackLine />
      </Track>
      <Marker width="16" height="40" viewBox="0 0 16 40">
        <path d="M0 0h16v5l-6 6H6L0 5z" fill="#5c5c5c" />
        <path d="M8 8v32" stroke="#5c5c5c" strokeWidth="3" />
      </Marker>
      <SettingsButton aria-label="Configurações"><Gear size={20} /></SettingsButton>
    </Footer>
  )
}

function App() {
  return (
    <Page>
      <GlobalStyle />
      <WindowTitle />
      <DocumentBar />
      <RibbonBar />
      <Viewport>
        <ModelScene />
        <Side>
          <Browser />
          <PanelBar>
            <PanelTitle $indent>COMENTÁRIOS</PanelTitle>
            <button aria-label="Adicionar comentário">
              <svg width="12" height="12" viewBox="0 0 12 12">
                <circle cx="6" cy="6" r="6" fill="#333" />
                <path d="M3 6h6M6 3v6" stroke="#fff" strokeWidth="1.500" />
              </svg>
            </button>
          </PanelBar>
        </Side>
        <ViewCube />
        <NavTools />
        <ChatButton aria-label="Assistente">
          <svg width="20" height="20" viewBox="0 0 20 20">
            <path d="M10 0a10 10 0 0 1 10 10v10H10A10 10 0 0 1 10 0z" fill="#000" />
            <path d="M4 13l4-3 8-3M5 9l4-2 5-1M9 13l6-2" fill="none" stroke="#fff" strokeWidth="1.500" />
          </svg>
        </ChatButton>
      </Viewport>
      <Timeline />
    </Page>
  )
}

export default App
